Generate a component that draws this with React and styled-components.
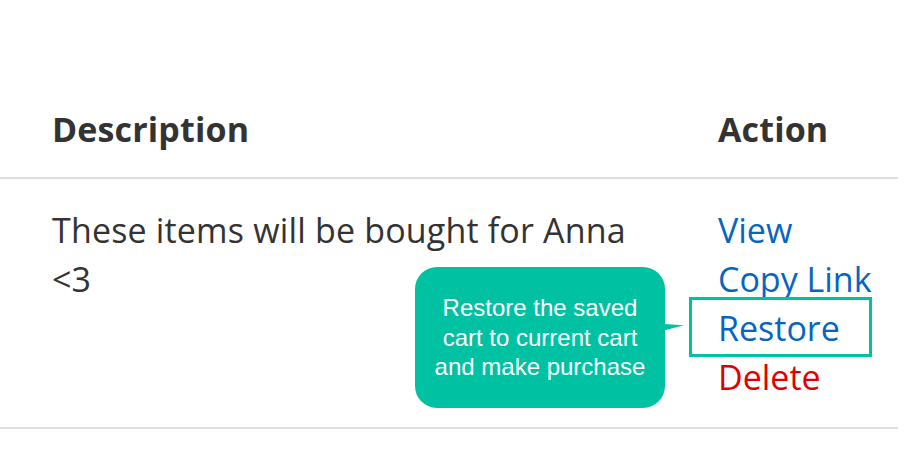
import React from "react";
import styled, { createGlobalStyle } from "styled-components";

const Global = createGlobalStyle`
  html, body { margin: 0; padding: 0; background: #ffffff; }
  body { font-family: "Open Sans", "Noto Sans", sans-serif; color: #333333; }
`;

const Page = styled.div`
  padding-top: 81px;
  width: 898px;
`;

const Row = styled.div`
  display: grid;
  grid-template-columns: 1fr 180px;
  border-bottom: 2px solid #dedede;
`;

const Cell = styled.div`
  padding: ${(p) => (p.$head ? "24px 0 23px" : "27px 0 25px")};
  padding-left: ${(p) => (p.$first ? "52px" : "0")};
  padding-right: ${(p) => (p.$first ? "60px" : "0")};
  font-size: 34px;
  line-height: 49px;
  letter-spacing: ${(p) => (p.$head ? "0.15px" : "0.17px")};
  font-weight: ${(p) => (p.$head ? 700 : 400)};
  color: #333333;
`;

const Description = styled.div`
  max-width: 606px;
`;

const Actions = styled.div`
  display: flex;
  flex-direction: column;
  align-items: flex-start;
  letter-spacing: 0;
`;

const ActionLink = styled.a`
  position: relative;
  display: inline-block;
  color: ${(p) => (p.$danger ? "#e10000" : "#0765bf")};
  text-decoration: none;
  cursor: pointer;
`;

const Highlight = styled.span`
  position: absolute;
  left: -29px;
  right: -32px;
  top: -7px;
  bottom: -4px;
  border: 3px solid #00c1a2;
  pointer-events: none;
`;

const Bubble = styled.div`
  position: absolute;
  right: calc(100% + 53px);
  top: -37px;
  width: 250px;
  height: 141px;
  box-sizing: border-box;
  border-radius: 22px;
  background: #00c2a3;
  color: #ffffff;
  font-family: "Liberation Sans", Arial, sans-serif;
  font-size: 24px;
  line-height: 29.5px;
  font-weight: 400;
  text-align: center;
  display: flex;
  align-items: center;
  justify-content: center;
  padding: 0 8px;
  white-space: nowrap;
`;

const Pointer = styled.svg`
  position: absolute;
  left: 100%;
  top: 57px;
  margin-left: -1px;
`;

export default function App() {
  return (
    <>
      <Global />
      <Page>
        <Row>
          <Cell $head $first>Description</Cell>
          <Cell $head>Action</Cell>
        </Row>
        <Row>
          <Cell $first>
            <Description>These items will be bought for Anna &lt;3</Description>
          </Cell>
          <Cell>
            <Actions>
              <ActionLink>View</ActionLink>
              <ActionLink>Copy Link</ActionLink>
              <ActionLink>
                Restore
                <Highlight />
                <Bubble>
                  Restore the saved
                  <br />
                  cart to current cart
                  <br />
                  and make purchase
                  <Pointer width="21" height="7" viewBox="0 0 21 7">
                    <polygon points="0,0 20,1.2 0,6.5" fill="#00c2a3" />
                  </Pointer>
                </Bubble>
              </ActionLink>
              <ActionLink $danger>Delete</ActionLink>
            </Actions>
          </Cell>
        </Row>
      </Page>
    </>
  );
}
